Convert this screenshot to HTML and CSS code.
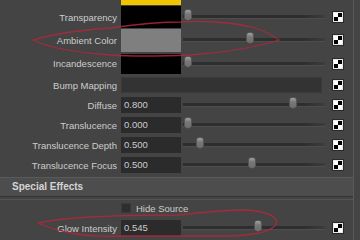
FILE: index.html
```html
<!DOCTYPE html>
<html lang="en">
<head>
  <meta charset="UTF-8" />
  <title>Attribute Editor</title>
  <link rel="stylesheet" href="styles.css">
</head>
<body>
  <div class="panel">
    <div class="row top">
      <span class="lbl"></span>
      <div class="swatch yellow"></div>
    </div>

    <div class="row r22">
      <span class="lbl">Transparency</span>
      <div class="swatch black"></div>
      <div class="slider"><span class="thumb" style="left:1px"></span></div>
      <span class="map"></span>
    </div>
    <div class="row r24">
      <span class="lbl">Ambient Color</span>
      <div class="swatch grey"></div>
      <div class="slider"><span class="thumb" style="left:63px"></span></div>
      <span class="map"></span>
    </div>
    <div class="row r23">
      <span class="lbl">Incandescence</span>
      <div class="swatch black short"></div>
      <div class="slider"><span class="thumb" style="left:1px"></span></div>
      <span class="map"></span>
    </div>

    <div class="row r20">
      <span class="lbl">Bump Mapping</span>
      <div class="bump"></div>
      <span class="map"></span>
    </div>

    <div class="row r20">
      <span class="lbl">Diffuse</span>
      <div class="field">0.800</div>
      <div class="slider"><span class="thumb" style="left:106px"></span></div>
      <span class="map"></span>
    </div>
    <div class="row r20">
      <span class="lbl">Translucence</span>
      <div class="field">0.000</div>
      <div class="slider"><span class="thumb" style="left:1px"></span></div>
      <span class="map"></span>
    </div>
    <div class="row r20">
      <span class="lbl">Translucence Depth</span>
      <div class="field">0.500</div>
      <div class="slider"><span class="thumb" style="left:13px"></span></div>
      <span class="map"></span>
    </div>
    <div class="row r20">
      <span class="lbl">Translucence Focus</span>
      <div class="field">0.500</div>
      <div class="slider"><span class="thumb" style="left:65px"></span></div>
      <span class="map"></span>
    </div>

    <div class="section-head">Special Effects</div>

    <div class="frame">
      <div class="row r18">
        <span class="lbl"></span>
        <label class="check"><span class="box"></span>Hide Source</label>
      </div>
      <div class="row r20">
        <span class="lbl">Glow Intensity</span>
        <div class="field">0.545</div>
        <div class="slider"><span class="thumb" style="left:71px"></span></div>
        <span class="map"></span>
      </div>
    </div>
  </div>

  <!-- red pen marks drawn over the screenshot -->
  <svg class="marks" width="360" height="240" viewBox="0 0 360 240">
    <path d="M181 22 C150 22 125 26 110 28 C80 30 50 35 33 40 C45 46 70 52 110 55 C140 57 165 56 190 55 C230 52 260 46 279 40 C265 30 250 24 215 22 C200 21 190 21 181 22" />
    <path d="M38 223 C60 218 110 215 180 215 C205 212 225 210 245 210 C265 211 275 216 277 222 C275 230 260 235 230 236 C190 236 150 236 120 236 C90 238 60 233 38 223" />
  </svg>
</body>
</html>
```

FILE: styles.css
```css
body {
  margin: 0;
  background: #444444;
  font-family: 'Liberation Sans', Arial, sans-serif;
  font-size: 9.5px;
  color: #cccccc;
  width: 360px;
  height: 240px;
  overflow: hidden;
  position: relative;
}

.panel {
  width: 353px;
  height: 240px;
  border-right: 1px solid #5a5a5a;
  background: #444444;
}

.row {
  display: flex;
  align-items: center;
}

.top { height: 6px; align-items: flex-start; }
.r18 { height: 18px; }
.r20 { height: 20px; }
.r22 { height: 22px; }
.r23 { height: 23px; }
.r24 { height: 24px; }

.lbl {
  width: 117px;
  margin-right: 4px;
  text-align: right;
  white-space: nowrap;
  flex-shrink: 0;
}

.swatch {
  width: 60px;
  height: 100%;
  flex-shrink: 0;
}

.swatch.short { height: 20px; }
.yellow { background: #f2c400; height: 5px; }
.black { background: #000000; }
.grey { background: #7f7f7f; height: 23px; }

.field {
  width: 57px;
  height: 16px;
  padding-left: 3px;
  line-height: 16px;
  background: #2b2b2b;
  flex-shrink: 0;
}

.bump {
  width: 201px;
  height: 16px;
  background: #333333;
  border: 1px solid #3a3a3a;
  box-sizing: border-box;
}

.slider {
  position: relative;
  width: 142px;
  height: 3px;
  margin-left: 2px;
  background: linear-gradient(to right, #2e2e2e 85%, #3c3c3c);
  border-bottom: 1px solid #4e4e4e;
}

.thumb {
  position: absolute;
  top: -6px;
  width: 8px;
  height: 12px;
  background: linear-gradient(#a2a2a2, #787878 40%, #6c6c6c);
  border: 1px solid #555555;
  border-radius: 3px 3px 1px 1px;
  clip-path: polygon(0 0, 100% 0, 100% 78%, 50% 100%, 0 78%);
  box-sizing: border-box;
}

.map {
  width: 10px;
  height: 10px;
  margin-left: auto;
  margin-right: 10px;
  background:
    conic-gradient(#000000 0 25%, #ffffff 25% 50%, #000000 50% 75%, #ffffff 75% 100%);
  border: 1px solid #e8e8e8;
  outline: 1px solid #2a2a2a;
  box-sizing: border-box;
  flex-shrink: 0;
}

.section-head {
  margin-top: 2px;
  height: 18px;
  line-height: 18px;
  padding-left: 12px;
  background: #4d4d4d;
  border-top: 1px solid #5a5a5a;
  border-bottom: 1px solid #353535;
  font-weight: bold;
  color: #d4d4d4;
  font-size: 10px;
}

.frame {
  margin-top: 2px;
  border-top: 1px solid #555555;
}

.check {
  display: flex;
  align-items: center;
  gap: 5px;
  margin-top: -2px;
}

.check .box {
  width: 10px;
  height: 10px;
  background: #2e2e2e;
  border: 1px solid #3a3a3a;
  box-sizing: border-box;
}

.marks {
  position: absolute;
  left: 0;
  top: 0;
  pointer-events: none;
}

.marks path {
  fill: none;
  stroke: #b0283c;
  stroke-width: 1.3;
  opacity: 0.85;
}
```
